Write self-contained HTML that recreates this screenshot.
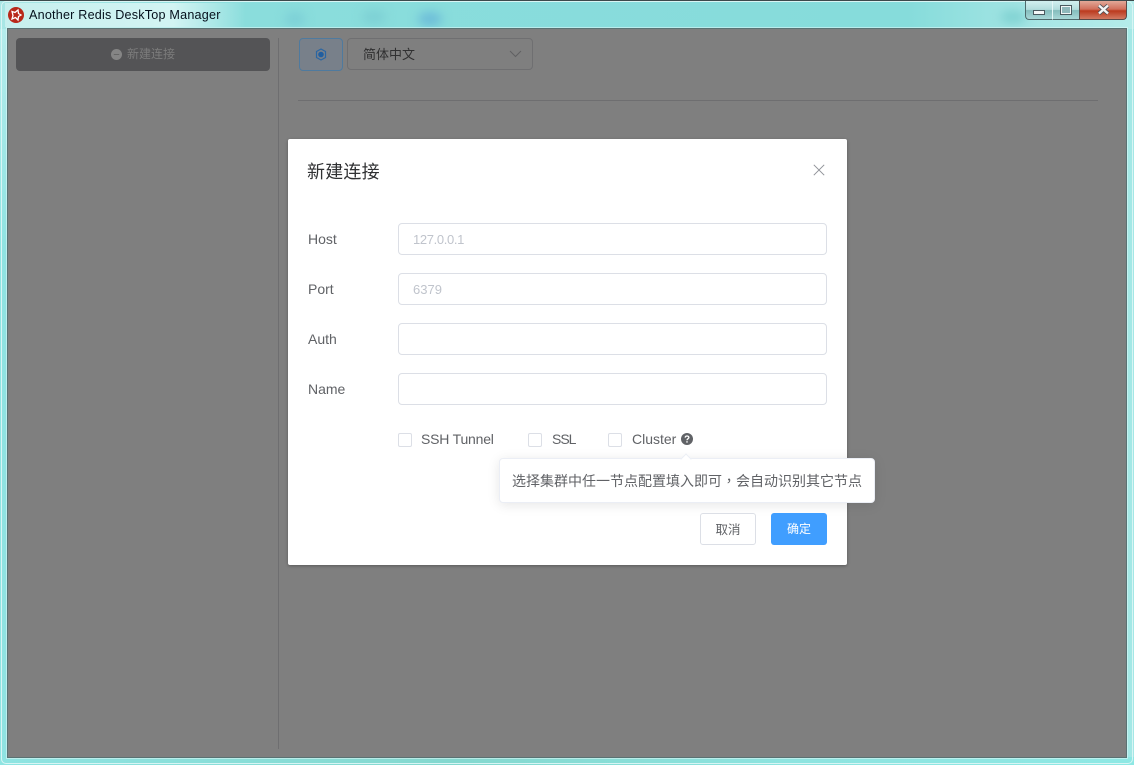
<!DOCTYPE html>
<html><head><meta charset="utf-8"><style>
*{box-sizing:border-box}
html,body{margin:0;padding:0;width:1134px;height:765px;overflow:hidden;background:#8ee6e3;font-family:"Liberation Sans","Noto Sans CJK SC",sans-serif}
.a{position:absolute}
.t{white-space:nowrap;line-height:20px}
.inp{position:absolute;left:398px;width:429px;height:32px;border:1px solid #dcdfe6;border-radius:4px;background:#fff;font-size:13px;line-height:31px;padding-left:14px;color:#c0c4cc}
.lb{position:absolute;left:308px;font-size:14px;line-height:20px;color:#606266}
.cb{position:absolute;top:433px;width:14px;height:14px;border:1px solid #dcdfe6;border-radius:2px;background:#fff}
.cl{position:absolute;top:429px;font-size:14px;line-height:20px;color:#606266;white-space:nowrap}
.b{position:absolute;filter:blur(5px);border-radius:50%}
</style></head><body>
<div class="a" style="left:0;top:0;width:1134px;height:29px;background:linear-gradient(90deg,#a9e6e5 0,#8adddc 22%,#86dcdb 80%,#a8e6e5 92%,#b4ecea 100%)"></div>
<div class="a" style="left:0;top:29px;width:8px;height:736px;background:linear-gradient(#b4ecec,#8fe3e2 30%,#8fe3e2)"></div>
<div class="a" style="left:1126px;top:29px;width:8px;height:736px;background:#a4e8e6"></div>
<div class="a" style="left:0;top:757px;width:1134px;height:8px;background:linear-gradient(90deg,#8fe4e2,#84d8cf 40%,#8ee4e0 70%,#8ee8e4)"></div>
<div class="a" style="left:0;top:0;width:1134px;height:1px;background:#3c4a4c"></div>
<div class="a" style="left:1px;top:1px;width:1132px;height:763px;border:1px solid #d8f5f4;border-radius:5px"></div>
<div class="a" style="left:5px;top:3px;width:240px;height:24px;background:linear-gradient(90deg,#c6efee,#d2f4f3 70%,rgba(190,240,240,0));"></div>
<div class="b" style="left:285px;top:12px;width:20px;height:14px;background:#7ccfd6"></div>
<div class="b" style="left:362px;top:10px;width:24px;height:14px;background:#7dd0d4"></div>
<div class="b" style="left:418px;top:12px;width:24px;height:14px;background:#6cbcd8"></div>
<div class="b" style="left:1000px;top:10px;width:26px;height:14px;background:#80d2d2"></div>
<svg class="a" style="left:8px;top:7px" width="16" height="16" viewBox="0 0 16 16"><circle cx="8" cy="8" r="8" fill="#b8281a"/><path d="M4 4.5L7 5.5L10 3L10.5 6.5L13 8L10.5 9.5L10 13L7.5 10.5L4 12L5 8.5Z" fill="none" stroke="#fff" stroke-width="1.3"/></svg>
<div class="a t" style="left:29px;top:5px;font-size:12.6px;letter-spacing:.21px;color:#05101c">Another Redis DeskTop Manager</div>

<div class="a" style="left:1025px;top:1px;width:27px;height:19px;background:linear-gradient(#d2efef 0,#b2dcdc 48%,#84bcbc 52%,#a8d8d8 100%);border:1px solid #4e6a6c;border-top:0;border-right:0;border-radius:0 0 0 4px"></div>
<div class="a" style="left:1052px;top:1px;width:27px;height:19px;background:linear-gradient(#d2efef 0,#b2dcdc 48%,#84bcbc 52%,#a8d8d8 100%);border-left:1px solid #e4f6f6;border-bottom:1px solid #4e6a6c"></div>
<div class="a" style="left:1079px;top:1px;width:48px;height:19px;background:linear-gradient(#e2a898 0,#d0705c 45%,#bb3a1e 55%,#d27a62 100%);border:1px solid #5a4a48;border-top:0;border-radius:0 0 4px 0"></div>
<div class="a" style="left:1033px;top:10px;width:12px;height:5px;background:#f4f8f8;border:1px solid #4a5a60"></div>
<div class="a" style="left:1060px;top:5px;width:12px;height:10px;background:#8fb8bb;border:2px solid #f2f6f6;outline:1px solid #4a5a60;outline-offset:-1px"></div>
<svg class="a" style="left:1097px;top:4px" width="13" height="11" viewBox="0 0 13 11"><path d="M2 1.5L11 9.5M11 1.5L2 9.5" stroke="#4a5056" stroke-width="4"/><path d="M2 1.5L11 9.5M11 1.5L2 9.5" stroke="#f4f4f4" stroke-width="2.4"/></svg>

<div class="a" style="left:7px;top:28px;width:1120px;height:730px;background:#7f7f7f;border:1px solid #5a7273;box-shadow:0 0 0 1px rgba(225,250,250,.55)"></div>

<div class="a" style="left:16px;top:38px;width:254px;height:33px;background:#545456;border-radius:4px"></div>
<svg class="a" style="left:111px;top:49px" width="11" height="11" viewBox="0 0 11 11"><circle cx="5.5" cy="5.5" r="5.5" fill="#858585"/><path d="M2.8 5.5H8.2" stroke="#666" stroke-width="1"/></svg>
<div class="a t" style="left:127px;top:44px;font-size:12px;color:#7c7c7c">新建连接</div>
<div class="a" style="left:278px;top:38px;width:1px;height:711px;background:#6e6e70"></div>

<div class="a" style="left:299px;top:38px;width:44px;height:33px;background:#78808a;border:1px solid #4f7a9e;border-radius:4px"></div>
<svg class="a" style="left:315px;top:48px" width="12" height="13" viewBox="0 0 12 13"><path d="M6 1L10.5 3.5V9.5L6 12L1.5 9.5V3.5Z" fill="none" stroke="#2b66a3" stroke-width="1.2"/><circle cx="6" cy="6.5" r="2.8" fill="#205ea0"/></svg>
<div class="a" style="left:347px;top:38px;width:186px;height:32px;border:1px solid #6f6f71;border-radius:4px"></div>
<div class="a t" style="left:363px;top:45px;font-size:13px;color:#303031">简体中文</div>
<svg class="a" style="left:509px;top:50px" width="13" height="8" viewBox="0 0 13 8"><path d="M1 1L6.5 6.5L12 1" fill="none" stroke="#606062" stroke-width="1"/></svg>
<div class="a" style="left:298px;top:100px;width:800px;height:1px;background:#6e6e70"></div>

<div class="a" style="left:288px;top:139px;width:559px;height:426px;background:#fff;border-radius:2px;box-shadow:0 1px 3px rgba(0,0,0,.3)"></div>
<div class="a t" style="left:307px;top:162px;font-size:18px;letter-spacing:.2px;color:#303133">新建连接</div>
<svg class="a" style="left:813px;top:164px" width="12" height="12" viewBox="0 0 12 12"><path d="M.8.8L11.2 11.2M11.2.8L.8 11.2" stroke="#909399" stroke-width="1"/></svg>

<div class="lb" style="top:229px">Host</div><div class="inp" style="top:223px;letter-spacing:-.35px">127.0.0.1</div>
<div class="lb" style="top:279px">Port</div><div class="inp" style="top:273px">6379</div>
<div class="lb" style="top:329px">Auth</div><div class="inp" style="top:323px"></div>
<div class="lb" style="top:379px">Name</div><div class="inp" style="top:373px"></div>

<div class="cb" style="left:398px"></div><div class="cl" style="left:421px;letter-spacing:-.2px">SSH Tunnel</div>
<div class="cb" style="left:528px"></div><div class="cl" style="left:552px;letter-spacing:-1px">SSL</div>
<div class="cb" style="left:608px"></div><div class="cl" style="left:632px">Cluster</div>
<svg class="a" style="left:681px;top:433px" width="12" height="12" viewBox="0 0 12 12"><circle cx="6" cy="6" r="6" fill="#606266"/><path d="M4.2 4.6C4.2 3.5 5 3 6 3S7.9 3.6 7.9 4.5C7.9 5.7 6 5.7 6 7.2" fill="none" stroke="#fff" stroke-width="1.3"/><rect x="5.3" y="8.2" width="1.4" height="1.4" fill="#fff"/></svg>

<div class="a" style="left:499px;top:458px;width:376px;height:45px;background:#fff;border:1px solid #ebeef5;border-radius:4px;box-shadow:0 2px 12px rgba(0,0,0,.1)"></div>
<div class="a" style="left:682px;top:455px;width:8px;height:8px;background:#fff;transform:rotate(45deg);border-left:1px solid #ebeef5;border-top:1px solid #ebeef5"></div>
<div class="a t" style="left:512px;top:471px;font-size:14px;color:#606266">选择集群中任一节点配置填入即可<span style="font-family:'Noto Sans CJK TC',sans-serif">，</span>会自动识别其它节点</div>

<div class="a" style="left:700px;top:513px;width:56px;height:32px;background:#fff;border:1px solid #dcdfe6;border-radius:3px;font-size:12.5px;line-height:32px;text-align:center;color:#606266">取消</div>
<div class="a" style="left:771px;top:513px;width:56px;height:32px;background:#409eff;border-radius:3px;font-size:12px;line-height:33px;text-align:center;color:#fff">确定</div>
</body></html>
